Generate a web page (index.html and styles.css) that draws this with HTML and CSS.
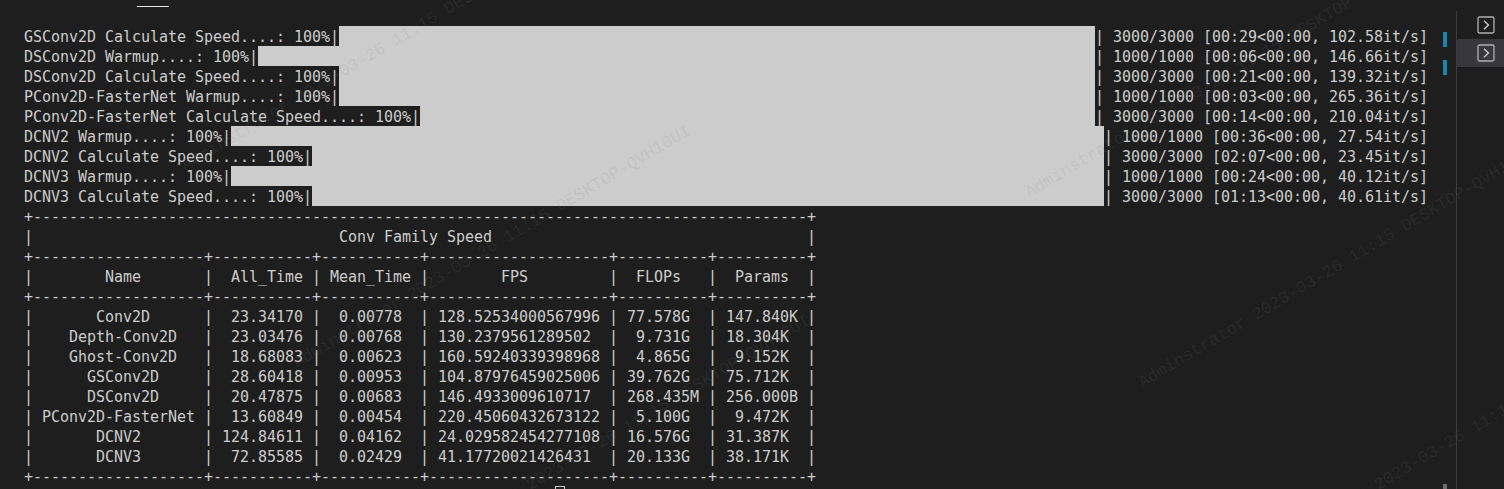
FILE: index.html
```html
<!DOCTYPE html>
<html lang="en">
<head>
<meta charset="utf-8">
<title>Terminal</title>
<link rel="stylesheet" href="styles.css">
</head>
<body>
<div class="workbench">
  <main class="terminal">
    <div class="tabs"><div class="tab-underline"></div></div>
    <div class="progress-list">
      <div class="row"><span>GSConv2D Calculate Speed....: 100%|</span><span class="bar"></span><span>| 3000/3000 [00:29&lt;00:00, 102.58it/s]</span></div>
      <div class="row"><span>DSConv2D Warmup....: 100%|</span><span class="bar"></span><span>| 1000/1000 [00:06&lt;00:00, 146.66it/s]</span></div>
      <div class="row"><span>DSConv2D Calculate Speed....: 100%|</span><span class="bar"></span><span>| 3000/3000 [00:21&lt;00:00, 139.32it/s]</span></div>
      <div class="row"><span>PConv2D-FasterNet Warmup....: 100%|</span><span class="bar"></span><span>| 1000/1000 [00:03&lt;00:00, 265.36it/s]</span></div>
      <div class="row"><span>PConv2D-FasterNet Calculate Speed....: 100%|</span><span class="bar"></span><span>| 3000/3000 [00:14&lt;00:00, 210.04it/s]</span></div>
      <div class="row"><span>DCNV2 Warmup....: 100%|</span><span class="bar"></span><span>| 1000/1000 [00:36&lt;00:00, 27.54it/s]</span></div>
      <div class="row"><span>DCNV2 Calculate Speed....: 100%|</span><span class="bar"></span><span>| 3000/3000 [02:07&lt;00:00, 23.45it/s]</span></div>
      <div class="row"><span>DCNV3 Warmup....: 100%|</span><span class="bar"></span><span>| 1000/1000 [00:24&lt;00:00, 40.12it/s]</span></div>
      <div class="row"><span>DCNV3 Calculate Speed....: 100%|</span><span class="bar"></span><span>| 3000/3000 [01:13&lt;00:00, 40.61it/s]</span></div>
    </div>
<pre class="table">+--------------------------------------------------------------------------------------+
|                                  Conv Family Speed                                   |
+-------------------+-----------+-----------+--------------------+----------+----------+
|        Name       |  All_Time | Mean_Time |        FPS         |  FLOPs   |  Params  |
+-------------------+-----------+-----------+--------------------+----------+----------+
|       Conv2D      |  23.34170 |  0.00778  | 128.52534000567996 | 77.578G  | 147.840K |
|    Depth-Conv2D   |  23.03476 |  0.00768  | 130.2379561289502  |  9.731G  | 18.304K  |
|    Ghost-Conv2D   |  18.68083 |  0.00623  | 160.59240339398968 |  4.865G  |  9.152K  |
|      GSConv2D     |  28.60418 |  0.00953  | 104.87976459025006 | 39.762G  | 75.712K  |
|      DSConv2D     |  20.47875 |  0.00683  | 146.4933009610717  | 268.435M | 256.000B |
| PConv2D-FasterNet |  13.60849 |  0.00454  | 220.45060432673122 |  5.100G  |  9.472K  |
|       DCNV2       | 124.84611 |  0.04162  | 24.029582454277108 | 16.576G  | 31.387K  |
|       DCNV3       |  72.85585 |  0.02429  | 41.17720021426431  | 20.133G  | 38.171K  |
+-------------------+-----------+-----------+--------------------+----------+----------+</pre>
    <div class="cursor"></div>
  </main>
  <div class="ruler">
    <span class="mark"></span>
    <span class="mark"></span>
    <span class="mark-end"></span>
  </div>
  <aside class="sessions">
    <div class="session">
      <svg class="term-icon" viewBox="0 0 18 18"><rect x="1" y="1" width="16" height="16" rx="1.5"/><path class="term-chevron" d="M7 4.8l4.4 4.2-4.4 4.2"/></svg>
    </div>
    <div class="session session-active">
      <svg class="term-icon" viewBox="0 0 18 18"><rect x="1" y="1" width="16" height="16" rx="1.5"/><path class="term-chevron" d="M7 4.8l4.4 4.2-4.4 4.2"/></svg>
    </div>
  </aside>
</div>
<div class="watermarks" aria-hidden="true">
  <span class="wm wm-a">Adminstrator 2023-03-26 11:15 DESKTOP-QVH10UI</span>
  <span class="wm wm-b">Adminstrator 2023-03-26 11:15 DESKTOP-QVH10UI</span>
  <span class="wm wm-c">Adminstrator 2023-03-26 11:15 DESKTOP-QVH10UI</span>
  <span class="wm wm-d">Adminstrator 2023-03-26 11:15 DESKTOP-QVH10UI</span>
  <span class="wm wm-e">Adminstrator 2023-03-26 11:15 DESKTOP-QVH10UI</span>
  <span class="wm wm-f">Adminstrator 2023-03-26 11:15 DESKTOP-QVH10UI</span>
</div>
</body>
</html>
```
FILE: styles.css
```css
* { box-sizing: border-box; }
html, body { margin: 0; height: 489px; overflow: hidden; background: #1e1e1e; }
body { position: relative; }
.workbench { display: flex; height: 489px; }
.terminal {
  width: 1428px;
  flex: none;
  padding-left: 24px;
  color: #cccccc;
  font-family: "DejaVu Sans Mono", "Liberation Mono", monospace;
  font-size: 15px;
  letter-spacing: -0.03px;
  line-height: 20px;
}
.tabs { height: 26px; margin-left: -24px; padding-top: 6px; }
.tab-underline { width: 32px; height: 1px; margin-left: 137px; background: #e7e7e7; }
.row { display: flex; align-items: flex-start; height: 20px; line-height: 22px; white-space: pre; }
.bar { flex: none; flex-grow: 1; height: 20px; background: #cccccc; }
.table { margin: 0; padding-top: 1px; font: inherit; letter-spacing: inherit; white-space: pre; }
.cursor { width: 10px; height: 20px; margin-top: -1px; margin-left: 531px; border: 1px solid #cccccc; }
.ruler {
  width: 4px;
  flex: none;
  margin: 0 9px 0 15px;
  padding-top: 32px;
  display: flex;
  flex-direction: column;
  gap: 13px;
}
.mark { height: 15px; background: #1a85ad; }
.mark-end { height: 5px; margin-top: auto; background: #6a6a6a; }
.sessions {
  flex: 1;
  margin-top: 11px;
  border-left: 1px solid #3c3c3c;
  display: flex;
  flex-direction: column;
}
.session { height: 28px; display: flex; align-items: center; padding-left: 20px; }
.session-active { background: #37373d; }
.term-icon { width: 18px; height: 18px; fill: none; stroke: #b0b0b0; stroke-width: 1.3; }
.term-chevron { stroke: #c5c5c5; stroke-width: 1.5; }
.watermarks { position: absolute; inset: 0; overflow: hidden; pointer-events: none; }
.wm {
  position: absolute;
  height: 20px;
  line-height: 20px;
  white-space: pre;
  font-family: "Liberation Mono", monospace;
  font-size: 17px;
  color: rgba(128, 128, 128, 0.13);
  transform-origin: 0 100%;
  transform: rotate(-30.7deg);
}
.wm-a { left: 1145px; top: 373px; }
.wm-b { left: 1032px; top: 183px; }
.wm-c { left: 188px; top: 156px; }
.wm-d { left: 300px; top: 353px; }
.wm-e { left: 419px; top: 543px; }
.wm-f { left: 1267px; top: 543px; }
```
